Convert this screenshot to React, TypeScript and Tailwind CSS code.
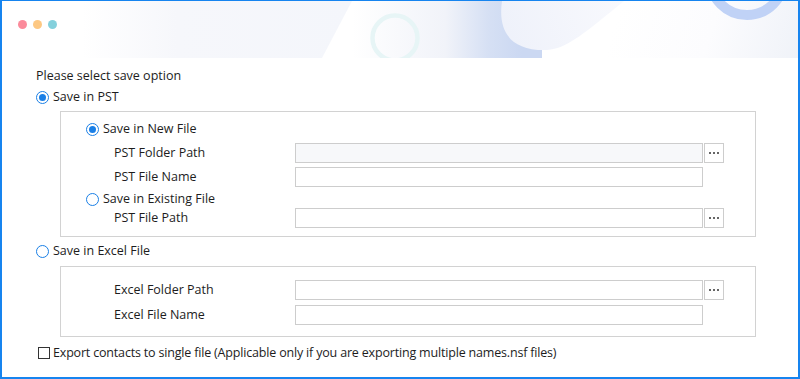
import React from 'react';

/* ── Header decoration ── */
function HeaderArt() {
  return (
    <svg className="absolute inset-0" width="800" height="57" viewBox="0 0 800 57">
      <defs>
        <linearGradient id="band" x1="0" y1="0" x2="1" y2="0">
          <stop offset="0" stopColor="#ffffff" />
          <stop offset="0.35" stopColor="#f6f7fb" />
          <stop offset="1" stopColor="#f4f6fb" />
        </linearGradient>
        <linearGradient id="mid" gradientUnits="userSpaceOnUse" x1="350" y1="0" x2="520" y2="0">
          <stop offset="0" stopColor="#ffffff" />
          <stop offset="0.55" stopColor="#f1f3f9" />
          <stop offset="0.8" stopColor="#d6e0f4" />
          <stop offset="1" stopColor="#cbd8f2" />
        </linearGradient>
        <linearGradient id="swoosh" gradientUnits="userSpaceOnUse" x1="500" y1="50" x2="620" y2="0">
          <stop offset="0" stopColor="#eef1fa" />
          <stop offset="1" stopColor="#f8f9fd" />
        </linearGradient>
        <linearGradient id="right" gradientUnits="userSpaceOnUse" x1="620" y1="0" x2="800" y2="57">
          <stop offset="0" stopColor="#ffffff" />
          <stop offset="0.5" stopColor="#fcfcfe" />
          <stop offset="1" stopColor="#eff2f8" />
        </linearGradient>
      </defs>
      <rect width="800" height="57" fill="#ffffff" />
      <polygon points="80,0 350,0 320,57 80,57" fill="url(#band)" />
      <polygon points="356,0 560,0 560,57 326,57" fill="url(#mid)" />
      <rect x="540" y="0" width="260" height="57" fill="url(#right)" />
      <path d="M500,0 C496,28 506,50 545,49 C565,48 585,30 622,0 Z" fill="url(#swoosh)" />
      <circle cx="393" cy="37" r="22.5" fill="none" stroke="#e7f5f6" strokeWidth="4.5" />
      <circle cx="745" cy="-23" r="37" fill="none" stroke="#c0d2f6" strokeWidth="10" />
    </svg>
  );
}

function Radio({ checked }: { checked?: boolean }) {
  return (
    <span className="w-[13px] h-[13px] rounded-full border border-[#1a7fe6] bg-white flex items-center justify-center shrink-0">
      {checked && <span className="w-[7px] h-[7px] rounded-full bg-[#1a7fe6]" />}
    </span>
  );
}

function RadioRow({ label, checked }: { label: string; checked?: boolean }) {
  return (
    <div className="flex items-center gap-[4px] h-[18px]">
      <Radio checked={checked} />
      <span>{label}</span>
    </div>
  );
}

function FieldRow({ label, browse, shaded, className = '' }: { label: string; browse?: boolean; shaded?: boolean; className?: string }) {
  return (
    <div className={`flex items-center h-[20px] ${className}`}>
      <span className="w-[181px] ml-[28px] shrink-0">{label}</span>
      <div className={`w-[408px] h-[20px] border border-[#cdcdcd] ${shaded ? 'bg-[#f7f8fa]' : 'bg-white'}`} />
      {browse && (
        <button className="ml-[1px] w-[20px] h-[20px] border border-[#cdcdcd] bg-white flex items-center justify-center gap-[2px]">
          <span className="w-[2px] h-[2px] bg-[#666]" />
          <span className="w-[2px] h-[2px] bg-[#666]" />
          <span className="w-[2px] h-[2px] bg-[#666]" />
        </button>
      )}
    </div>
  );
}

export default function App() {
  return (
    <div
      className="w-[800px] h-[379px] bg-white border-t border-l-2 border-r-2 border-b-2 border-[#1684ef] overflow-hidden text-[12.5px] text-[#1d1d1d] leading-none"
      style={{ fontFamily: '"Open Sans", "Liberation Sans", sans-serif' }}
    >
      {/* 标题栏 */}
      <div className="relative h-[56px]">
        <HeaderArt />
        <div className="relative flex gap-[6px] pt-[19px] pl-[16px]">
          <span className="w-[9px] h-[9px] rounded-full bg-[#fb8b9b]" />
          <span className="w-[9px] h-[9px] rounded-full bg-[#fdc883]" />
          <span className="w-[9px] h-[9px] rounded-full bg-[#84d0dc]" />
        </div>
      </div>

      <div className="pl-[34px]">
        <div className="h-[18px] flex items-center mt-[10px]">Please select save option</div>
        <div className="mt-[3px]">
          <RadioRow label="Save in PST" checked />
        </div>

        <div className="mt-[5px] ml-[24px] w-[696px] h-[126px] border border-[#d2d2d2] pl-[25px] pt-[8px]">
          <RadioRow label="Save in New File" checked />
          <FieldRow label="PST Folder Path" browse shaded className="mt-[5px]" />
          <FieldRow label="PST File Name" className="mt-[4px]" />
          <div className="mt-[3px]">
            <RadioRow label="Save in Existing File" />
          </div>
          <FieldRow label="PST File Path" browse />
        </div>

        <div className="mt-[5px]">
          <RadioRow label="Save in Excel File" />
        </div>

        <div className="mt-[6px] ml-[24px] w-[696px] h-[71px] border border-[#d2d2d2] pl-[25px] pt-[13px]">
          <FieldRow label="Excel Folder Path" browse />
          <FieldRow label="Excel File Name" className="mt-[5px]" />
        </div>

        <label className="mt-[7px] h-[18px] flex items-center gap-[3px]">
          <span className="ml-[2px] w-[12px] h-[12px] border border-[#333] bg-white shrink-0" />
          <span className="tracking-[-0.18px]">
            Export contacts to single file (Applicable only if you are exporting multiple names.nsf files)
          </span>
        </label>
      </div>
    </div>
  );
}
